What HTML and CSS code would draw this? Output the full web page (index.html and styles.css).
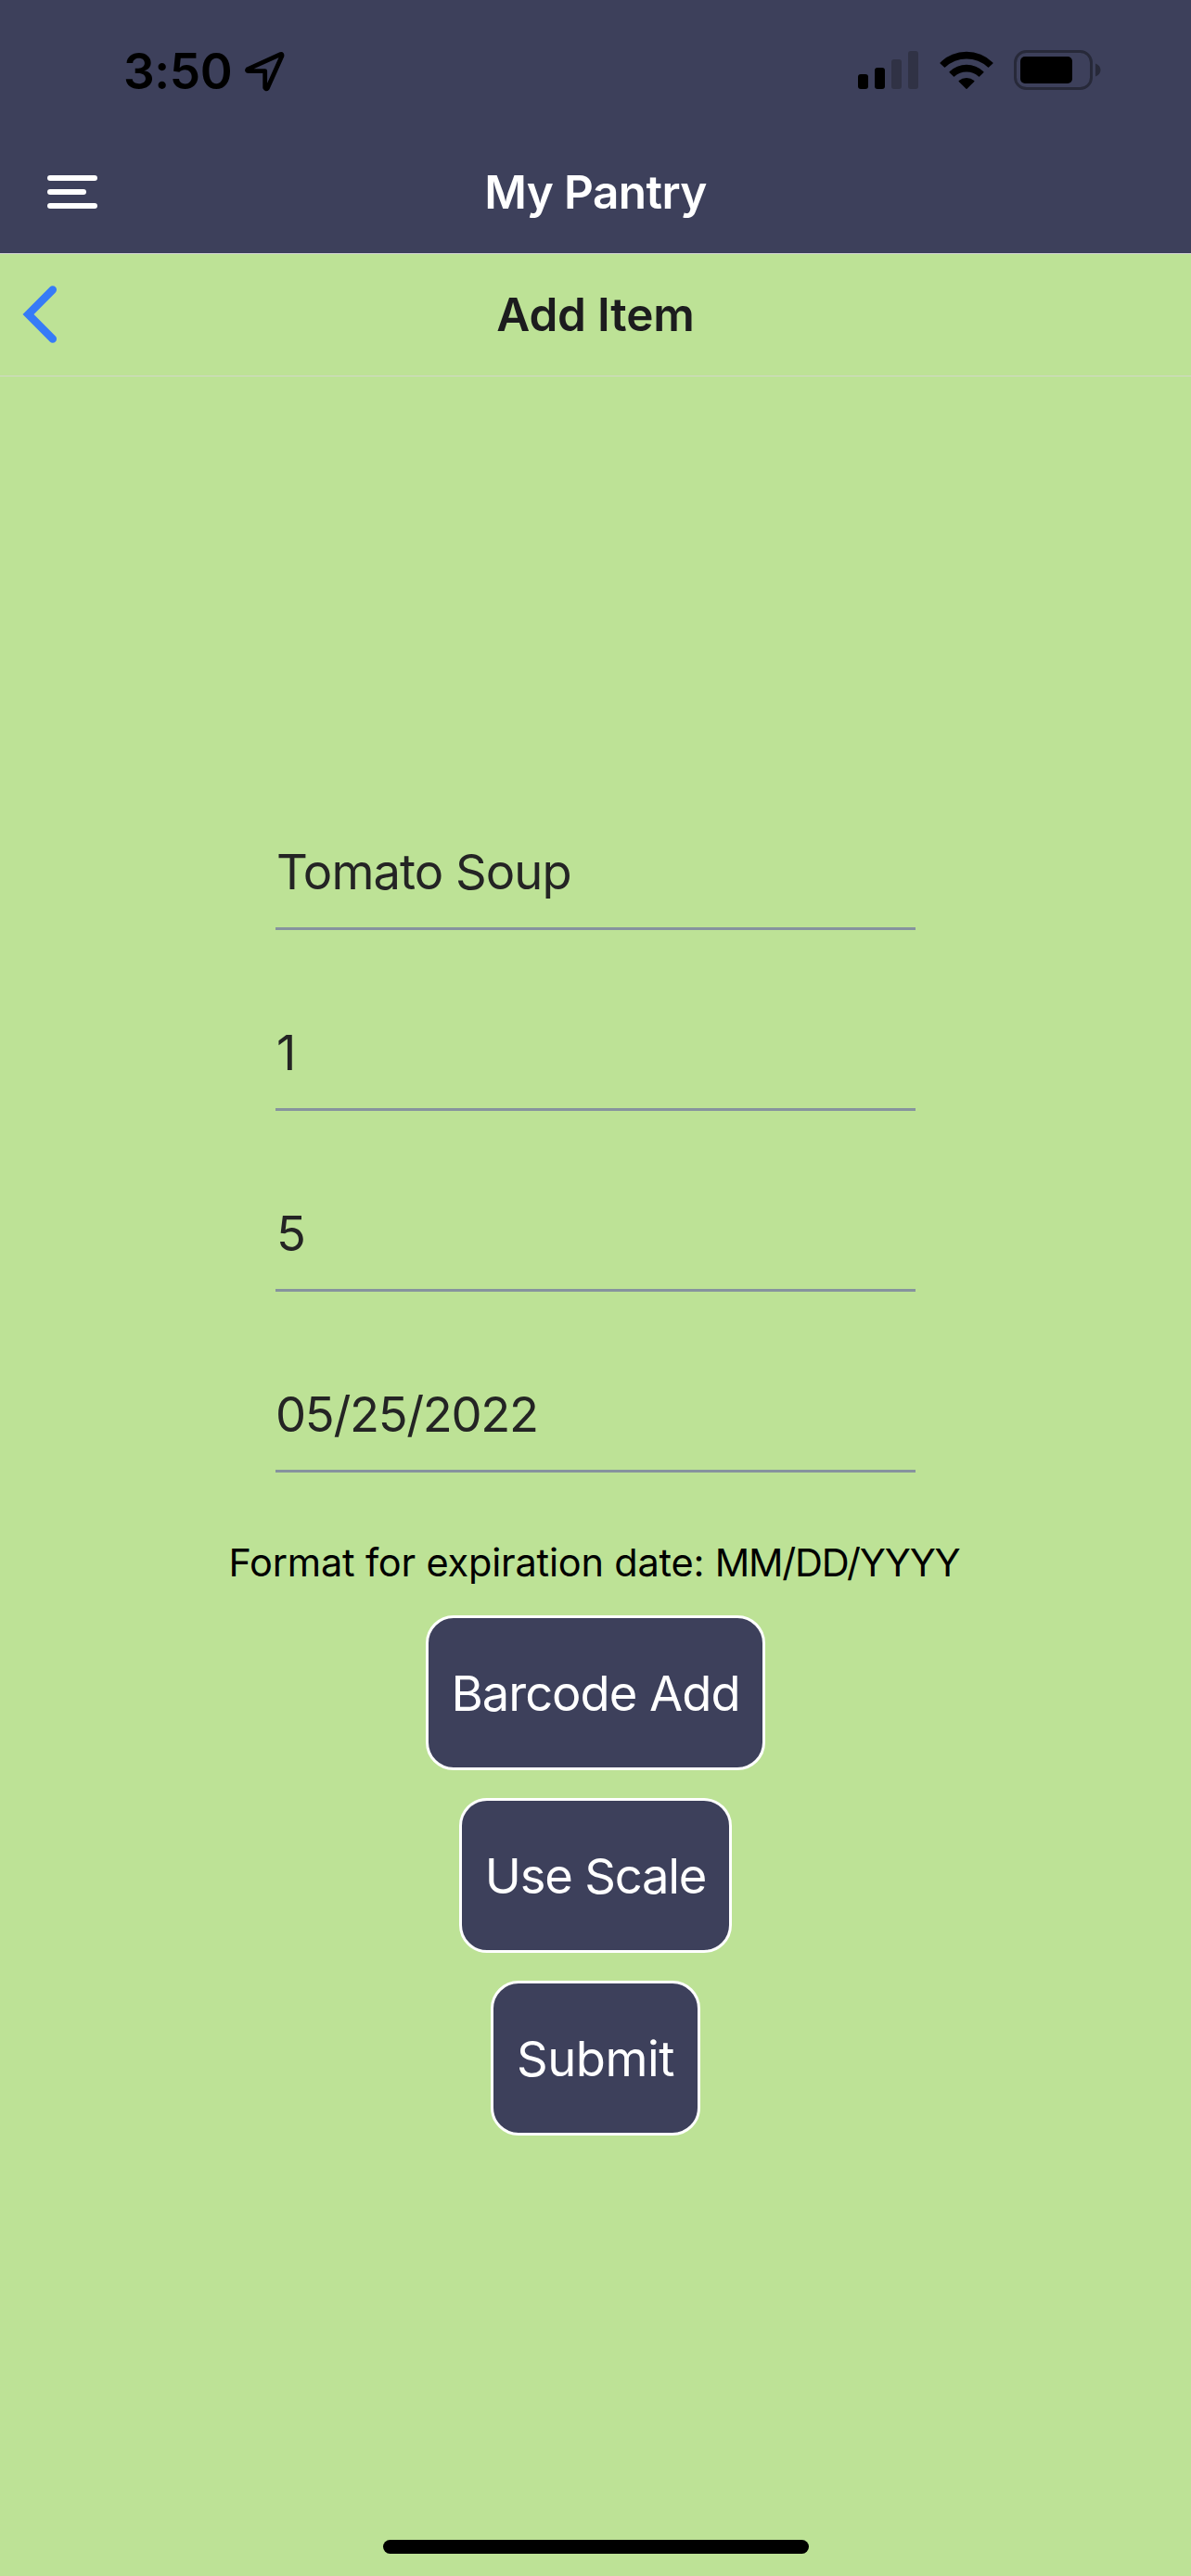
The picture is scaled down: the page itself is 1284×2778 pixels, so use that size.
FILE: index.html
```html
<!DOCTYPE html>
<html lang="en">
<head>
<meta charset="utf-8">
<title>My Pantry</title>
<link rel="stylesheet" href="styles.css">
</head>
<body>
<div class="screen">
  <header class="app-header">
    <div class="status-bar">
      <div class="status-left">
        <span class="time">3:50</span>
        <svg class="location" width="44" height="44" viewBox="0 0 44 44" aria-hidden="true">
          <path d="M39.6 3.5 4 19.6Q2.6 21.4 4.6 21.7H22.7V39.6Q23.7 41.8 25.4 40L41 5.200Q41.300 3 39.600 3.500Z" fill="none" stroke="#000" stroke-width="4.800" stroke-linejoin="round"/>
        </svg>
      </div>
      <div class="status-right">
        <svg width="65" height="43" viewBox="0 0 65 43" aria-hidden="true">
          <rect x="0" y="26" width="11" height="16" rx="3"/>
          <rect x="18" y="19" width="11" height="23" rx="3"/>
          <g fill="#303245">
            <rect x="36" y="10" width="11" height="32" rx="3"/>
            <rect x="54" y="1" width="11" height="41" rx="3"/>
          </g>
        </svg>
        <svg class="wifi" width="58" height="43" viewBox="0 0 58 43" aria-hidden="true">
          <path d="M.6 13.4A40.4 40.4 0 0 1 57.4 13.4Q57.8 13.9 57.4 14.4L53 18.6Q52.5 19 52 18.6A33.5 33.5 0 0 0 6 18.6Q5.5 19 5 18.6L.6 14.4Q.2 13.9 .6 13.4Z"/>
          <path d="M10.6 23.2A26.5 26.5 0 0 1 47.4 23.2Q47.8 23.7 47.4 24.2L43 28.5Q42.5 28.9 42 28.5A19.5 19.5 0 0 0 16 28.5Q15.5 28.9 15 28.5L10.6 24.2Q10.2 23.7 10.6 23.2Z"/>
          <path d="M20.7 33A12.8 12.8 0 0 1 37.3 33Q37.7 33.5 37.3 34L29.5 41.7Q29 42.1 28.5 41.7L20.7 34Q20.3 33.5 20.7 33Z"/>
        </svg>
        <svg class="battery" width="95" height="43" viewBox="0 0 95 43" aria-hidden="true">
          <rect x="1.5" y="1.5" width="82" height="40" rx="12" fill="none" stroke="#272939" stroke-width="3"/>
          <rect x="7" y="7" width="56" height="29" rx="5"/>
          <path d="M88 14.5C91.5 15.8 93.5 18.3 93.5 21.5S91.5 27.2 88 28.5Z" fill="#272939"/>
        </svg>
      </div>
    </div>
    <div class="nav-bar">
      <svg class="menu" width="54" height="36" viewBox="0 0 54 36" role="img" aria-label="Menu">
        <g fill="#fff">
          <rect width="54" height="6" rx="3"/>
          <rect y="15" width="42" height="6" rx="3"/>
          <rect y="30" width="54" height="6" rx="3"/>
        </g>
      </svg>
      <h1 class="app-title">My Pantry</h1>
    </div>
  </header>

  <div class="sub-header">
    <svg class="back" width="38" height="64" viewBox="0 0 38 64" role="img" aria-label="Back">
      <path d="M32.8 5.5 6.5 32 32.8 58.5" fill="none" stroke="#367bf7" stroke-width="8.5" stroke-linecap="round"/>
    </svg>
    <h2 class="page-title">Add Item</h2>
  </div>

  <main class="form">
    <input class="field" type="text" value="Tomato Soup" aria-label="Name">
    <input class="field" type="text" value="1" aria-label="Quantity">
    <input class="field" type="text" value="5" aria-label="Amount">
    <input class="field date" type="text" value="05/25/2022" aria-label="Expiration date">
    <p class="hint">Format for expiration date: <span class="pattern">MM/DD/YYYY</span></p>
    <button class="button barcode">Barcode Add</button>
    <button class="button scale">Use Scale</button>
    <button class="button submit">Submit</button>
  </main>
  <div class="home-indicator"></div>
</div>
</body>
</html>
```
FILE: styles.css
```css
* { box-sizing: border-box; }

body {
  margin: 0;
  font-family: Inter, "Liberation Sans", sans-serif;
  background: #bde296;
}

svg { display: block; flex: none; }

.screen {
  display: flex;
  flex-direction: column;
  width: 1284px;
  height: 2778px;
  overflow: hidden;
}

.app-header {
  height: 274px;
  background: #3d405b;
  border-bottom: 1px solid #d8d8d8;
}

.status-bar {
  display: flex;
  justify-content: space-between;
  height: 141px;
  padding: 54px 96px 0 133px;
}

.status-left,
.status-right { display: flex; align-items: flex-start; }

.time {
  font-size: 53px;
  font-weight: 600;
  letter-spacing: -0.4px;
  line-height: 47px;
}

.location { margin-left: 13px; margin-top: 1px; }
.wifi { margin-left: 22.5px; }
.battery { margin-left: 22.5px; }

.nav-bar,
.sub-header {
  display: grid;
  grid-template-columns: 200px 1fr 200px;
  align-items: center;
  height: 132px;
}

.menu { margin-left: 51px; }

.app-title,
.page-title {
  margin: 0;
  text-align: center;
  font-size: 49.5px;
  font-weight: 600;
  line-height: 60px;
}

.app-title { color: #fff; letter-spacing: -0.6px; }
.page-title { color: #1c1c1e; letter-spacing: -0.17px; }

.sub-header { padding-bottom: 2px; border-bottom: 1px solid #d2d9c8; }
.back { margin-left: 24px; }

.form {
  display: flex;
  flex-direction: column;
  align-items: center;
  flex: 1;
  padding-top: 474px;
}

.field {
  width: 690px;
  height: 123px;
  margin: 0 0 72px;
  padding: 0 0 0 1px;
  border: 0;
  border-bottom: 3px solid #86939e;
  background: transparent;
  color: #242424;
  font: 400 52.5px/60px Inter, "Liberation Sans", sans-serif;
  letter-spacing: -0.94px;
}

.field.date { margin-bottom: 67px; padding-left: 0; letter-spacing: -1.33px; }

.hint {
  margin: 0;
  padding-right: 3px;
  height: 87px;
  color: #000;
  font-size: 41.5px;
  line-height: 60px;
  letter-spacing: -0.2px;
  white-space: nowrap;
}

.pattern { letter-spacing: -1.2px; }

.button {
  flex: none;
  height: 167px;
  margin: 0 0 30px;
  padding: 0;
  border: 3px solid #fff;
  border-radius: 30px;
  background: #3d405b;
  color: #fff;
  font: 400 52.5px/60px Inter, "Liberation Sans", sans-serif;
}

.barcode { width: 366px; letter-spacing: -1.01px; }
.scale { width: 294px; letter-spacing: -1.19px; }
.submit { width: 226px; letter-spacing: -0.5px; }

.home-indicator {
  align-self: center;
  width: 459px;
  height: 15px;
  margin-bottom: 24px;
  border-radius: 8px;
  background: #000;
}
```
